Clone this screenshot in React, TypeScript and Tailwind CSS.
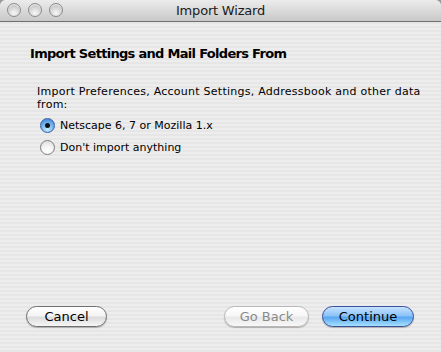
import React from 'react';

const stripes =
  'bg-[repeating-linear-gradient(180deg,#ededed_0px,#ededed_2px,#e6e6e6_2px,#e6e6e6_4px)]';

function TrafficLight() {
  return (
    <span className="block h-[14px] w-[14px] rounded-full border border-[#8a8a8a] bg-[radial-gradient(circle_at_50%_75%,#f8f8f8_0%,#d2d2d2_55%,#a4a4a4_100%)] shadow-[inset_0_1px_1px_rgba(255,255,255,0.9)]" />
  );
}

function Radio({ checked, label }: { checked?: boolean; label: string }) {
  return (
    <label className="flex items-center gap-[5px]">
      {checked ? (
        <span className="flex h-[15px] w-[15px] items-center justify-center rounded-full border border-[#3a5f9f] bg-[radial-gradient(circle_at_50%_80%,#c8ecff_0%,#6fb3ee_50%,#3a7fd0_100%)]">
          <span className="h-[5px] w-[5px] rounded-full bg-[#111]" />
        </span>
      ) : (
        <span className="h-[15px] w-[15px] rounded-full border border-[#7d7d7d] bg-[radial-gradient(circle_at_50%_80%,#ffffff_0%,#f2f2f2_50%,#d4d4d4_100%)]" />
      )}
      <span>{label}</span>
    </label>
  );
}

function Button({ label, variant = 'normal', width }: { label: string; variant?: 'normal' | 'disabled' | 'default'; width: string }) {
  const styles = {
    normal:
      'border-[#6f6f6f] text-black bg-[linear-gradient(180deg,#ffffff_0%,#f4f4f4_45%,#dcdcdc_55%,#f6f6f6_100%)]',
    disabled:
      'border-[#b8b8b8] text-[#8a8a8a] bg-[linear-gradient(180deg,#ffffff_0%,#f7f7f7_45%,#e9e9e9_55%,#f8f8f8_100%)]',
    default:
      'border-[#3b4f9a] text-black bg-[linear-gradient(180deg,#c6e2ff_0%,#8cc4f8_45%,#5aa7f2_55%,#a6e1ff_100%)]',
  }[variant];
  return (
    <button className={`flex h-[21px] items-center justify-center rounded-full border text-[13px] shadow-[0_1px_1px_rgba(0,0,0,0.25)] ${width} ${styles}`}>
      {label}
    </button>
  );
}

export default function App() {
  return (
    <div className="h-[352px] w-[441px] overflow-hidden bg-[#9a9a9a] font-['DejaVu_Sans',sans-serif]">
      <div className={`flex h-full flex-col overflow-hidden rounded-t-[6px] ${stripes}`}>
        <header className="relative flex h-[22px] shrink-0 items-center justify-center border-b border-[#6e6e6e] bg-[linear-gradient(180deg,#ececec_0%,#dadada_50%,#c8c8c8_100%)]">
          <div className="absolute left-[7px] top-[3px] flex gap-[7px]">
            <TrafficLight />
            <TrafficLight />
            <TrafficLight />
          </div>
          <h1 className="text-[13px] tracking-[-0.2px] text-[#1a1a1a]">Import Wizard</h1>
        </header>

        <main className="flex flex-1 flex-col pl-[30px] pr-[14px] pt-[22px] text-black">
          <h2 className="text-[13px] font-bold tracking-[-0.7px]">Import Settings and Mail Folders From</h2>
          <div className="mt-[21px] pl-[7px] text-[11px] leading-[13px] tracking-[0.25px]">
            <p>Import Preferences, Account Settings, Addressbook and other data from:</p>
            <div className="mt-[7px] flex flex-col gap-[7px] pl-[3px] tracking-normal">
              <Radio checked label="Netscape 6, 7 or Mozilla 1.x" />
              <Radio label="Don't import anything" />
            </div>
          </div>
        </main>

        <footer className="flex items-center pb-[25px] pl-[26px] pr-[27px]">
          <Button label="Cancel" width="w-[81px]" />
          <div className="ml-auto flex gap-[13px]">
            <Button label="Go Back" variant="disabled" width="w-[85px]" />
            <Button label="Continue" variant="default" width="w-[92px]" />
          </div>
        </footer>
      </div>
    </div>
  );
}
